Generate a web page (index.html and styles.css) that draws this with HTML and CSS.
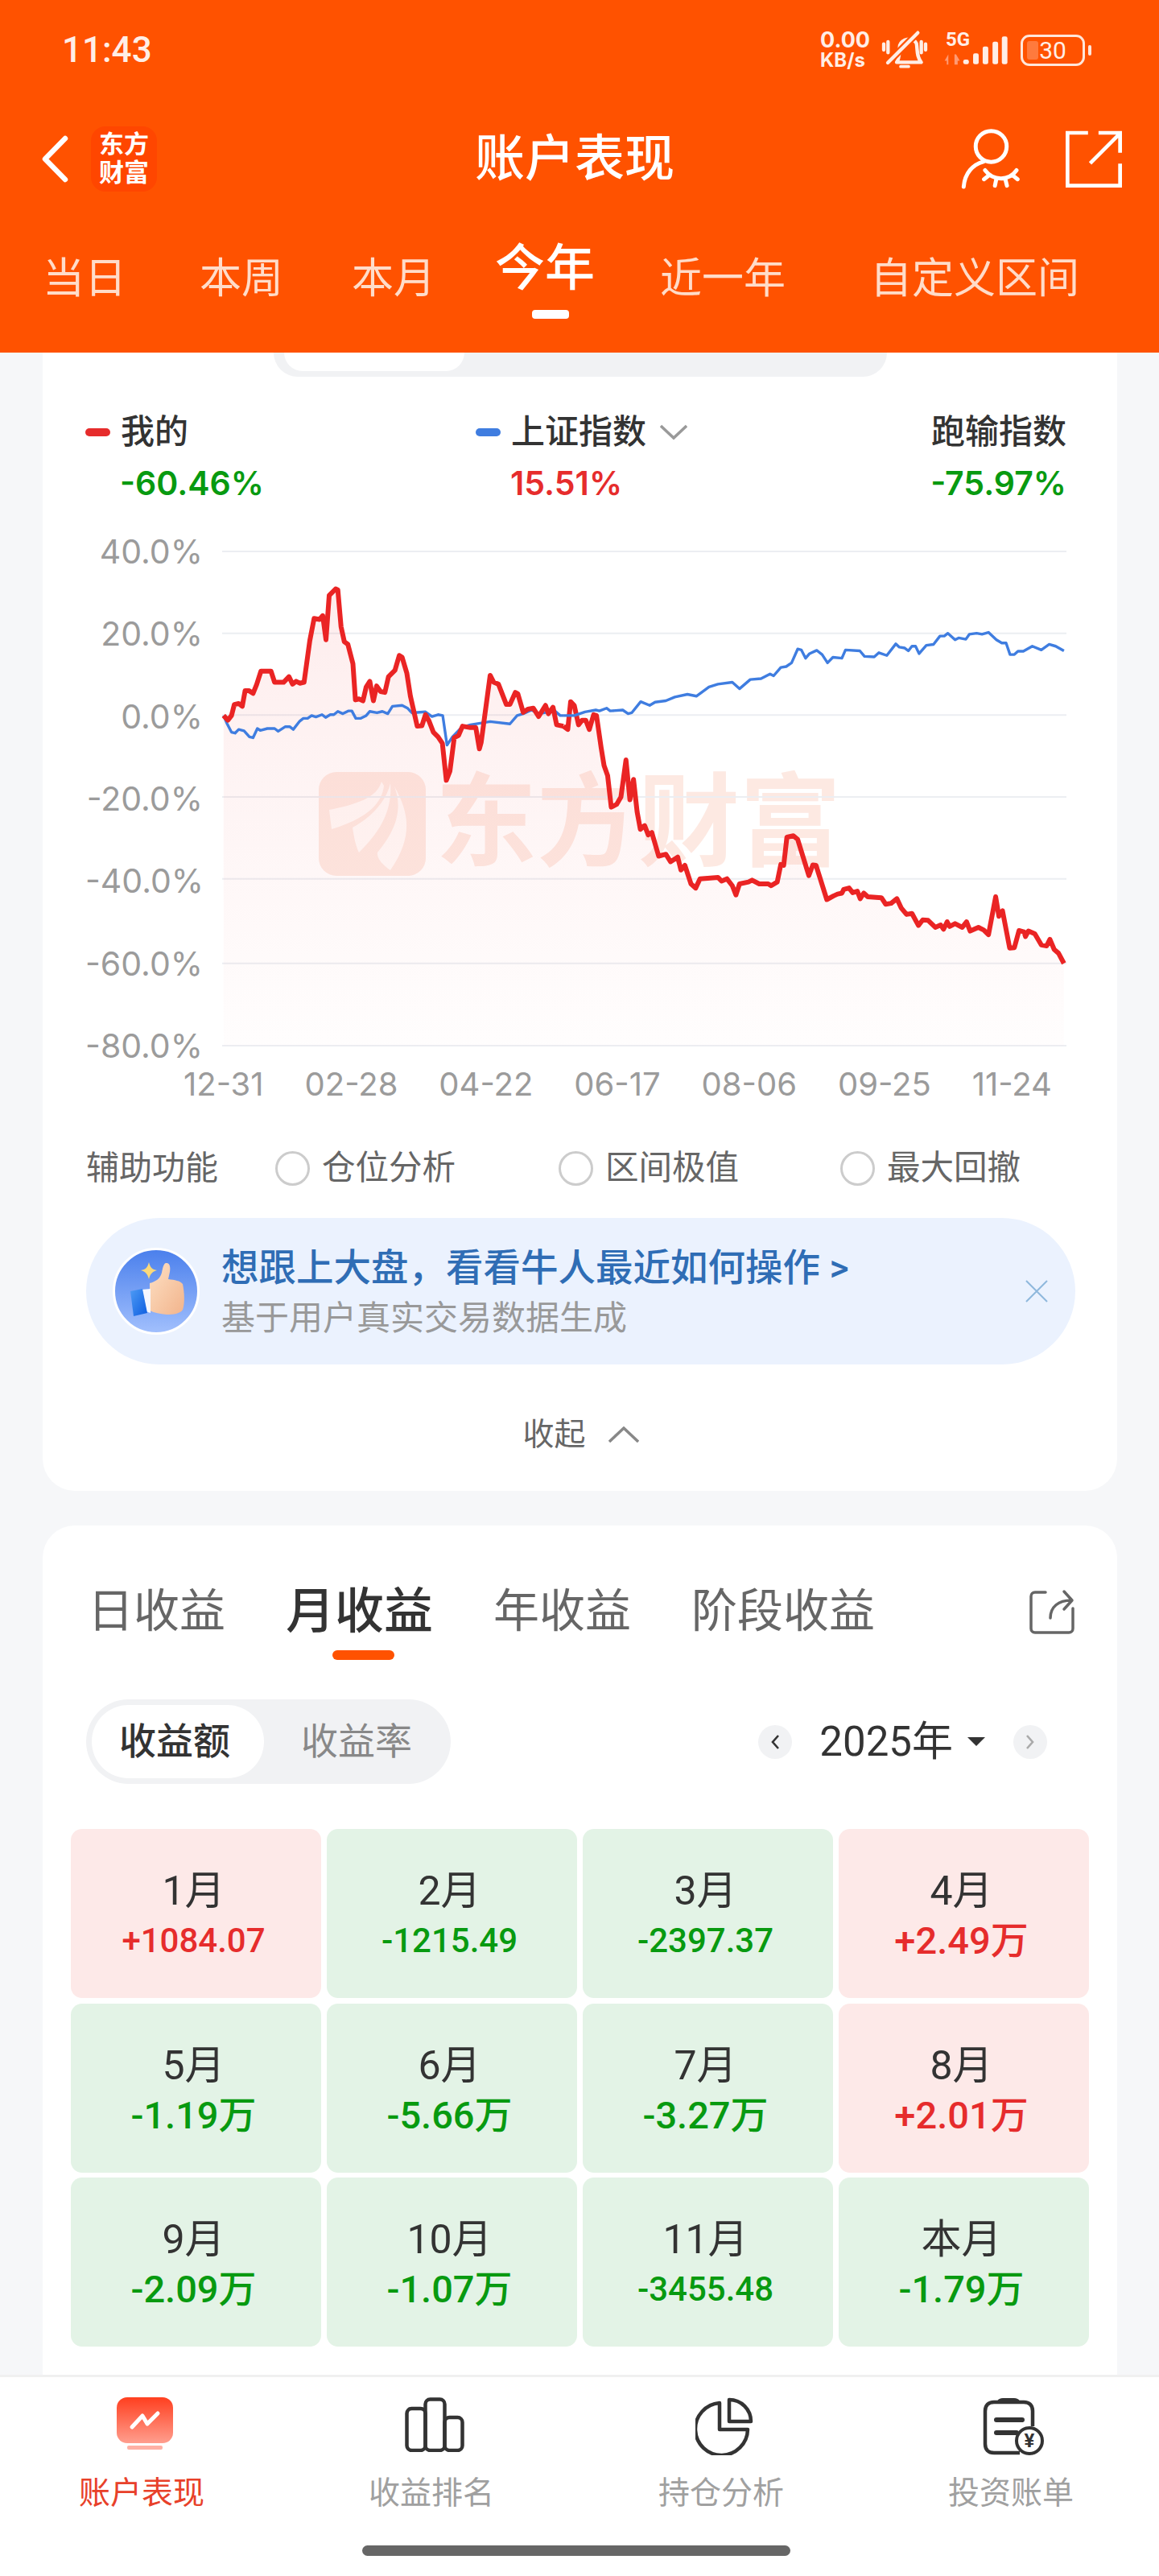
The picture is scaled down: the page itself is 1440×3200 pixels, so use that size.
FILE: index.html
```html
<!DOCTYPE html>
<html lang="zh-CN">
<head>
  <meta charset="UTF-8" />
  <title>账户表现</title>
  <link rel="stylesheet" href="styles.css">
</head>
<body>

  <header class="app-head">
    <div class="status">
      <span class="time">11:43</span>
      <div class="status-icons">
        <div class="speed"><span>0.00</span><span class="speed-unit">KB/s</span></div>
        <svg class="bell" viewBox="288 56 174 148" fill="none" stroke="#ffeee6" stroke-width="13" stroke-linecap="round" stroke-linejoin="round">
          <path d="M297 108v22M313 100v40M453 108v22M437 100v40"/>
          <path d="M345 176c14-18 8-42 12-64 5-22 48-32 62-6 4 24 0 50 18 70z"/>
          <path d="M312 178 424 66" stroke="#ff5200" stroke-width="26"/>
          <path d="M312 178 424 66"/>
          <path d="M360 192h30" stroke-width="11"/>
        </svg>
        <div class="signal">
          <span class="net">5G</span>
          <svg viewBox="510 70 245 118" fill="#ffeee6">
            <path d="M515 170l14-24v38h-6v-14zM552 146h6l14 24h-8v14h-12z" fill="#ff9a73"/>
            <rect x="585" y="165" width="21" height="18" rx="7"/>
            <rect x="622" y="142" width="21" height="41" rx="7"/>
            <rect x="658" y="116" width="21" height="67" rx="7"/>
            <rect x="695" y="98" width="21" height="85" rx="7"/>
            <rect x="730" y="78" width="21" height="105" rx="7"/>
          </svg>
        </div>
        <div class="battery"><i class="battery-fill"></i><span>30</span></div>
        <i class="battery-nub"></i>
      </div>
    </div>

    <div class="navbar">
      <div class="nav-left">
        <svg class="back" viewBox="0 0 33 59" fill="none" stroke="#fff" stroke-width="6.5" stroke-linecap="round" stroke-linejoin="round"><path d="M29 4 4 29.5 29 55"/></svg>
        <div class="brand">东方<br/>财富</div>
      </div>
      <div class="nav-title">账户表现</div>
      <div class="nav-right">
        <svg class="nav-user" viewBox="580 415 220 230" fill="none" stroke="#fff" stroke-width="15" stroke-linecap="round">
          <circle cx="693" cy="483" r="58"/>
          <path d="M590 634c4-50 34-84 74-94"/>
          <path d="M670 572c30 40 88 42 118 0M684 592l-18 14M712 606l-5 24M746 606l6 24M772 590l20 16"/>
        </svg>
        <svg class="nav-share" viewBox="970 420 215 218" fill="none" stroke="#fff" stroke-width="14">
          <path d="M1056 432H980v196h195v-82"/>
          <path d="M1095 432h80v74M1064 545l108-108"/>
        </svg>
      </div>
    </div>

    <nav class="range-tabs">
      <span>当日</span>
      <span>本周</span>
      <span>本月</span>
      <span class="on">今年</span>
      <span>近一年</span>
      <span>自定义区间</span>
    </nav>
  </header>

  <main class="scroll">
    <section class="card chart-card">
      <div class="seg-stub"><div class="seg-thumb"></div></div>

      <div class="legend">
        <div>
          <div class="legend-name"><i class="dash dash-red"></i>我的</div>
          <div class="legend-val down">-60.46%</div>
        </div>
        <div>
          <div class="legend-name"><i class="dash dash-blue"></i>上证指数
            <svg class="legend-caret" viewBox="0 0 34 20" fill="none" stroke="#999" stroke-width="3.5"><path d="M1 2l16 15L33 2"/></svg>
          </div>
          <div class="legend-val up">15.51%</div>
        </div>
        <div class="legend-end">
          <div class="legend-name">跑输指数</div>
          <div class="legend-val down">-75.97%</div>
        </div>
      </div>

      <div class="chart">
        <div class="y-axis">
          <span>40.0%</span><span>20.0%</span><span>0.0%</span><span>-20.0%</span><span>-40.0%</span><span>-60.0%</span><span>-80.0%</span>
        </div>
        <div class="plot">
          <div class="watermark">
            <svg viewBox="0 0 133 129">
              <rect width="133" height="129" rx="22" fill="#fde9e2"/>
              <path d="M78 12C72 32 48 40 13 47L16 71C52 60 78 44 81 17z" fill="#fffaf8"/>
              <path d="M89 14C84 36 66 56 42 69C44 82 46 92 50 100C72 78 92 52 89 14z" fill="#fffaf8"/>
              <path d="M94 18C112 50 118 80 89 122C80 116 72 108 73 100C98 70 104 44 94 18z" fill="#fffaf8"/>
            </svg>
            <span>东方财富</span>
          </div>
          <svg class="plot-lines" viewBox="484 357 2350 1069" preserveAspectRatio="none">
            <defs>
              <linearGradient id="areaFade" gradientUnits="userSpaceOnUse" x1="0" y1="440" x2="0" y2="1426">
                <stop offset="0" stop-color="#f24a4a" stop-opacity=".1"/>
                <stop offset="1" stop-color="#f24a4a" stop-opacity=".01"/>
              </linearGradient>
            </defs>
            <g class="grid-lines">
              <path d="M484 357H2834M484 534H2834M484 711H2834M484 888H2834M484 1065H2834M484 1248H2834M484 1426H2834"/>
            </g>
            <polygon fill="url(#areaFade)" points="488,1426 488,712 500,722 510,712 518,688 530,686 540,692 548,658 558,658 570,664 580,645 592,616 620,616 630,640 655,640 670,628 680,644 690,638 700,642 712,640 728,550 740,502 755,504 764,496 773,548 782,452 800,438 806,440 815,520 824,552 834,558 848,600 855,678 865,676 876,680 885,650 895,638 905,680 914,648 925,660 937,662 947,628 965,614 977,582 985,586 998,620 1008,670 1027,735 1040,734 1050,710 1060,724 1072,748 1085,758 1097,772 1108,852 1118,832 1130,760 1142,755 1153,735 1175,738 1190,738 1200,784 1205,770 1230,625 1240,640 1253,644 1275,688 1285,688 1300,662 1307,665 1322,705 1335,698 1350,696 1365,714 1384,690 1392,708 1405,694 1415,732 1434,735 1434,1426"/>
            <g transform="translate(1434 0)">
              <polygon fill="url(#areaFade)" points="0,1426 0,735 12,742 20,682 30,690 42,732 52,722 62,722 72,742 84,710 92,712 105,782 113,820 123,842 133,910 148,904 160,888 174,808 185,894 195,850 205,920 214,958 226,950 236,970 246,965 265,1016 285,1012 298,1028 318,1018 327,1046 338,1036 355,1076 368,1085 380,1065 430,1062 440,1070 455,1065 470,1080 480,1100 490,1076 515,1072 525,1068 545,1076 570,1076 578,1080 595,1072 605,1034 613,1036 622,975 640,972 652,980 683,1058 694,1035 703,1036 733,1110 752,1102 763,1098 775,1096 780,1088 795,1085 805,1095 818,1092 826,1108 836,1096 847,1104 885,1106 897,1120 912,1118 928,1108 940,1128 955,1142 970,1140 988,1166 1000,1154 1015,1155 1035,1170 1050,1165 1058,1174 1068,1158 1075,1168 1090,1162 1110,1170 1122,1158 1132,1178 1155,1170 1170,1176 1183,1186 1203,1104 1212,1146 1222,1134 1242,1215 1255,1214 1268,1177 1282,1180 1286,1190 1294,1178 1312,1184 1330,1208 1345,1210 1354,1196 1366,1218 1378,1226 1393,1248 1393,1426"/>
            </g>
            <polyline class="line-blue" points="488,712 498,730 510,748 520,750 530,742 545,745 560,758 570,760 582,740 590,744 610,740 630,740 640,746 660,736 672,736 682,742 700,724 710,718 722,718 733,712 745,715 762,710 772,716 785,710 795,710 806,703 820,708 835,702 845,702 856,718 870,718 885,712 895,703 915,706 930,703 945,708 958,692 985,690 1000,696 1012,706 1050,704 1068,714 1085,710 1098,712 1110,776 1125,758 1150,738 1175,732 1230,725 1285,730 1305,712 1322,708 1345,700 1365,708 1410,702 1425,712 1434,712"/>
            <polyline class="line-red" points="488,712 500,722 510,712 518,688 530,686 540,692 548,658 558,658 570,664 580,645 592,616 620,616 630,640 655,640 670,628 680,644 690,638 700,642 712,640 728,550 740,502 755,504 764,496 773,548 782,452 800,438 806,440 815,520 824,552 834,558 848,600 855,678 865,676 876,680 885,650 895,638 905,680 914,648 925,660 937,662 947,628 965,614 977,582 985,586 998,620 1008,670 1027,735 1040,734 1050,710 1060,724 1072,748 1085,758 1097,772 1108,852 1118,832 1130,760 1142,755 1153,735 1175,738 1190,738 1200,784 1205,770 1230,625 1240,640 1253,644 1275,688 1285,688 1300,662 1307,665 1322,705 1335,698 1350,696 1365,714 1384,690 1392,708 1405,694 1415,732 1434,735"/>
            <g transform="translate(1434 0)">
              <polyline class="line-red" points="0,735 12,742 20,682 30,690 42,732 52,722 62,722 72,742 84,710 92,712 105,782 113,820 123,842 133,910 148,904 160,888 174,808 185,894 195,850 205,920 214,958 226,950 236,970 246,965 265,1016 285,1012 298,1028 318,1018 327,1046 338,1036 355,1076 368,1085 380,1065 430,1062 440,1070 455,1065 470,1080 480,1100 490,1076 515,1072 525,1068 545,1076 570,1076 578,1080 595,1072 605,1034 613,1036 622,975 640,972 652,980 683,1058 694,1035 703,1036 733,1110 752,1102 763,1098 775,1096 780,1088 795,1085 805,1095 818,1092 826,1108 836,1096 847,1104 885,1106 897,1120 912,1118 928,1108 940,1128 955,1142 970,1140 988,1166 1000,1154 1015,1155 1035,1170 1050,1165 1058,1174 1068,1158 1075,1168 1090,1162 1110,1170 1122,1158 1132,1178 1155,1170 1170,1176 1183,1186 1203,1104 1212,1146 1222,1134 1242,1215 1255,1214 1268,1177 1282,1180 1286,1190 1294,1178 1312,1184 1330,1208 1345,1210 1354,1196 1366,1218 1378,1226 1393,1248"/>
              <polyline class="line-blue" points="0,712 30,712 60,704 90,700 100,702 120,696 130,702 165,700 180,708 190,706 215,682 240,690 255,683 285,680 310,672 345,666 370,670 405,650 430,644 470,640 490,654 520,634 550,632 575,622 585,626 605,608 620,606 635,598 652,568 662,570 674,588 685,578 705,571 720,580 735,598 750,586 775,588 785,570 825,572 838,584 865,585 878,576 900,582 925,557 935,564 950,566 960,572 970,562 980,562 990,578 1010,560 1030,558 1048,540 1060,540 1070,534 1090,548 1100,544 1120,547 1130,536 1150,534 1165,536 1183,532 1205,548 1220,555 1232,555 1243,580 1255,580 1265,573 1280,573 1305,562 1330,570 1352,558 1370,562 1393,572"/>
            </g>
          </svg>
        </div>
      </div>

      <div class="x-axis">
        <span>12-31</span><span>02-28</span><span>04-22</span><span>06-17</span><span>08-06</span><span>09-25</span><span>11-24</span>
      </div>

      <div class="aux-row">
        <span>辅助功能</span>
        <label class="aux-opt"><i></i>仓位分析</label>
        <label class="aux-opt"><i></i>区间极值</label>
        <label class="aux-opt"><i></i>最大回撤</label>
      </div>

      <div class="banner">
        <svg class="banner-pic" viewBox="0 0 108 108">
          <defs>
            <linearGradient id="picBg" x1="0" y1="0" x2="0" y2="1">
              <stop offset="0" stop-color="#4a7fec"/>
              <stop offset="1" stop-color="#a2c0fd"/>
            </linearGradient>
            <linearGradient id="picHand" x1="0" y1="0" x2="1" y2="1">
              <stop offset="0" stop-color="#fde0c4"/>
              <stop offset="1" stop-color="#f2b48c"/>
            </linearGradient>
            <linearGradient id="picCuff" x1="0" y1="0" x2="1" y2="1">
              <stop offset="0" stop-color="#4d9bf5"/>
              <stop offset="1" stop-color="#0f5ee0"/>
            </linearGradient>
          </defs>
          <circle cx="54" cy="54" r="52.5" fill="url(#picBg)" stroke="#fff" stroke-width="3"/>
          <path d="M45 18c2 7 4 9 10 10-6 2-8 4-10 11-2-7-4-9-10-11 6-1 8-3 10-10z" fill="#fbd97a"/>
          <path d="M46 44c8-2 13-6 15-13 1-5 2-11 5-12 5-1 6 5 5 11l-2 9c8 1 15 2 18 6 2 9 3 24 0 32-3 5-12 6-20 6-8-1-15-2-21-5z" fill="url(#picHand)"/>
          <path d="M36 52l11-1 0 30-9-3z" fill="#f6f8ff"/>
          <path d="M22 54l15-3 6 30-17 4z" fill="url(#picCuff)"/>
        </svg>
        <div class="banner-text">
          <div class="banner-title">想跟上大盘，看看牛人最近如何操作 &gt;</div>
          <div class="banner-sub">基于用户真实交易数据生成</div>
        </div>
        <svg class="banner-close" viewBox="0 0 28 28" fill="none" stroke="#8fb8dc" stroke-width="2"><path d="M1 1l26 26M27 1 1 27"/></svg>
      </div>

      <div class="fold">
        <span>收起</span>
        <svg viewBox="0 0 38 20" fill="none" stroke="#888" stroke-width="3.5"><path d="M1 19 19 2l18 17"/></svg>
      </div>
    </section>

    <section class="card income-card">
      <div class="income-tabs">
        <span>日收益</span>
        <span class="on">月收益</span>
        <span>年收益</span>
        <span>阶段收益</span>
        <svg class="income-share" viewBox="0 0 56 56" fill="none" stroke="#666" stroke-width="3.5" stroke-linecap="round" stroke-linejoin="round">
          <path d="M20 4H7C4 4 2 6 2 9v40c0 3 2 5 5 5h42c3 0 5-2 5-5V24"/>
          <path d="M26 36c0-14 10-22 26-22M43 3l10 11-10 11"/>
        </svg>
      </div>

      <div class="income-bar">
        <div class="toggle">
          <span class="on">收益额</span>
          <span class="off">收益率</span>
        </div>
        <div class="year">
          <i class="year-btn"><svg viewBox="0 0 12 20" fill="none" stroke="#333" stroke-width="2.6"><path d="M10 2 3 10l7 8"/></svg></i>
          <span class="year-text">2025年</span>
          <i class="year-caret"></i>
          <i class="year-btn"><svg viewBox="0 0 12 20" fill="none" stroke="#aaa" stroke-width="2.6"><path d="M2 2l7 8-7 8"/></svg></i>
        </div>
      </div>

      <div class="months">
        <div class="cell gain"><b>1月</b><span>+1084.07</span></div>
        <div class="cell loss"><b>2月</b><span>-1215.49</span></div>
        <div class="cell loss"><b>3月</b><span>-2397.37</span></div>
        <div class="cell gain"><b>4月</b><span class="big">+2.49万</span></div>
        <div class="cell loss"><b>5月</b><span class="big">-1.19万</span></div>
        <div class="cell loss"><b>6月</b><span class="big">-5.66万</span></div>
        <div class="cell loss"><b>7月</b><span class="big">-3.27万</span></div>
        <div class="cell gain"><b>8月</b><span class="big">+2.01万</span></div>
        <div class="cell loss"><b>9月</b><span class="big">-2.09万</span></div>
        <div class="cell loss"><b>10月</b><span class="big">-1.07万</span></div>
        <div class="cell loss"><b>11月</b><span>-3455.48</span></div>
        <div class="cell loss"><b>本月</b><span class="big">-1.79万</span></div>
      </div>
    </section>
  </main>

  <footer class="tabbar">
    <div class="tabbar-items">
      <div class="tab-item on">
        <div class="tab-icon">
          <svg width="70" height="65" viewBox="0 0 70 65">
            <defs>
              <linearGradient id="tabOn" x1="0" y1="0" x2="0" y2="1">
                <stop offset="0" stop-color="#ff3f1f"/>
                <stop offset="1" stop-color="#ff9e8e"/>
              </linearGradient>
            </defs>
            <rect width="70" height="57" rx="13" fill="url(#tabOn)"/>
            <rect x="13" y="60" width="44" height="5" rx="2" fill="#ffb0a4"/>
            <path d="M19 37 32 23l6 10 13-13" fill="none" stroke="#fff" stroke-width="5" stroke-linecap="round" stroke-linejoin="round"/>
          </svg>
        </div>
        <span>账户表现</span>
      </div>
      <div class="tab-item">
        <div class="tab-icon">
          <svg width="74" height="68" viewBox="0 0 74 68" fill="none" stroke="#333" stroke-width="4.5">
            <rect x="2.5" y="14" width="23" height="52" rx="6"/>
            <rect x="25.5" y="2.5" width="24" height="63.5" rx="6"/>
            <rect x="49.5" y="25" width="22" height="41" rx="6"/>
          </svg>
        </div>
        <span>收益排名</span>
      </div>
      <div class="tab-item">
        <div class="tab-icon">
          <svg width="72" height="72" viewBox="0 0 72 72" fill="none" stroke="#333" stroke-width="4.5" stroke-linejoin="round">
            <path d="M30 7A32.5 32.5 0 1 0 65 40H30z"/>
            <path d="M42 3a27 27 0 0 1 27 27H42z"/>
          </svg>
        </div>
        <span>持仓分析</span>
      </div>
      <div class="tab-item">
        <div class="tab-icon">
          <svg width="78" height="72" viewBox="0 0 78 72" fill="none" stroke="#333" stroke-width="4.5">
            <path d="M46 69H14C7 69 3 65 3 58V17C3 10 7 6 14 6H51C58 6 62 10 62 17V36"/>
            <path d="M18 5c1-3 4-4 7-4h14c3 0 6 1 7 4z" fill="#333" stroke="none"/>
            <path d="M17 28H49M17 44H42" stroke-width="6" stroke-linecap="round"/>
            <circle cx="58" cy="54" r="16" fill="#fff" stroke-width="4"/>
            <text class="yen" x="58" y="62" text-anchor="middle">¥</text>
          </svg>
        </div>
        <span>投资账单</span>
      </div>
    </div>
    <div class="home-bar"></div>
  </footer>

</body>
</html>
```

FILE: styles.css
```css
* { box-sizing: border-box; }
html, body { margin: 0; padding: 0; }
body {
  width: 1440px;
  height: 3200px;
  overflow: hidden;
  display: flex;
  flex-direction: column;
  background: #f6f7f9;
  color: #333;
  font-family: Roboto, "Noto Sans CJK SC", sans-serif;
}
i { display: block; font-style: normal; }

/* header */
.app-head {
  flex: none;
  height: 438px;
  background: #ff5200;
  color: #fff;
}
.status {
  height: 124px;
  padding: 0 84px 0 77px;
  display: flex;
  justify-content: space-between;
  align-items: center;
}
.time {
  font-size: 44px;
  font-weight: 500;
  color: #ffeee6;
}
.status-icons {
  display: flex;
  align-items: center;
  color: #ffeee6;
}
.speed {
  width: 61px;
  display: flex;
  flex-direction: column;
  font-family: Inter, sans-serif;
  font-size: 27px;
  font-weight: 700;
  line-height: 25px;
  white-space: nowrap;
}
.speed-unit { font-size: 24px; }
.bell {
  width: 58px;
  height: 50px;
  margin-left: 15px;
}
.signal {
  position: relative;
  width: 81px;
  height: 40px;
  margin-left: 19px;
}
.signal svg { width: 81px; height: 40px; display: block; }
.net {
  position: absolute;
  left: 3px;
  top: -6px;
  font-size: 24px;
  line-height: 26px;
  font-weight: 700;
}
.battery {
  position: relative;
  width: 80px;
  height: 39px;
  margin-left: 15px;
  border: 3px solid #ffe6da;
  border-radius: 11px;
  font-size: 30px;
  line-height: 33px;
  text-align: center;
}
.battery span { position: relative; }
.battery-fill {
  position: absolute;
  left: 5px;
  top: 5px;
  width: 14px;
  height: 23px;
  border-radius: 3px;
  background: #ff7a3d;
}
.battery-nub {
  width: 4px;
  height: 13px;
  margin-left: 4px;
  border-radius: 2px;
  background: #ffe6da;
}

.navbar {
  height: 146px;
  display: grid;
  grid-template-columns: 590px auto 1fr;
  align-items: center;
}
.nav-left {
  display: flex;
  align-items: center;
  gap: 28px;
  padding-left: 52px;
}
.back { width: 33px; height: 59px; }
.brand {
  width: 82px;
  height: 81px;
  border-radius: 18px;
  background: #ff4600;
  font-size: 31px;
  line-height: 35px;
  font-weight: 700;
  text-align: center;
  padding-top: 5px;
}
.nav-title {
  padding-top: 2px;
  font-size: 62px;
  font-weight: 500;
  line-height: 70px;
}
.nav-right {
  display: flex;
  justify-content: flex-end;
  align-items: center;
  gap: 56px;
  padding-right: 45px;
}
.nav-user { width: 73px; height: 77px; }
.nav-share { width: 72px; height: 73px; }

.range-tabs {
  display: grid;
  grid-template-columns: 195px 189px 178px 205px 261px auto;
  padding: 42px 0 0 53px;
  align-items: start;
  font-size: 52px;
  line-height: 70px;
  color: #ffdcc9;
}
.range-tabs .on {
  position: relative;
  margin-top: -13px;
  font-size: 62px;
  font-weight: 500;
  color: #fff;
}
.range-tabs .on::after {
  content: "";
  position: absolute;
  left: 46px;
  top: 86px;
  width: 46px;
  height: 11px;
  border-radius: 4px;
  background: #fff;
}

/* scroll area */
.scroll {
  flex: 1;
  min-height: 0;
  overflow: hidden;
  padding: 0 52px 0 53px;
  display: flex;
  flex-direction: column;
}
.card { background: #fff; }
.chart-card {
  flex: none;
  border-radius: 0 0 40px 40px;
  padding: 0 63px 45px 53px;
}
.seg-stub {
  width: 762px;
  height: 30px;
  margin-left: 234px;
  padding: 0 13px;
  background: #f1f2f4;
  border-radius: 0 0 36px 36px;
}
.seg-thumb {
  width: 224px;
  height: 23px;
  background: #fff;
  border-radius: 0 0 30px 30px;
}

.legend {
  display: grid;
  grid-template-columns: 485px 1fr auto;
  margin-top: 44px;
}
.legend-name {
  display: flex;
  align-items: center;
  font-size: 42px;
  line-height: 50px;
  color: #333;
  font-weight: 500;
}
.dash {
  width: 31px;
  height: 10px;
  margin-right: 13px;
  border-radius: 5px;
}
.dash-red { background: #e62c2c; }
.dash-blue { background: #3f7de0; }
.legend-caret { width: 34px; height: 20px; margin-left: 17px; }
.legend-val {
  margin: 13px 0 0 43px;
  font-family: Inter, sans-serif;
  font-size: 41px;
  line-height: 50px;
  font-weight: 600;
}
.legend-end { text-align: right; }
.legend-end .legend-name { justify-content: flex-end; }
.legend-end .legend-val { margin-left: 0; }
.up { color: #e62c2c; }
.down { color: #089a10; }

.chart {
  display: grid;
  grid-template-columns: 146px 1049px;
  column-gap: 24px;
  margin-top: 60px;
}
.y-axis {
  display: flex;
  flex-direction: column;
  justify-content: space-between;
  margin: -25px 0;
  text-align: right;
  font-family: Inter, sans-serif;
  font-size: 41px;
  line-height: 50px;
  color: #9b9b9b;
}
.plot {
  position: relative;
  height: 614px;
}
.watermark {
  position: absolute;
  left: 120px;
  top: 274px;
  display: flex;
  gap: 12px;
  color: #fde9e2;
  font-size: 126px;
  line-height: 129px;
  font-weight: 700;
  white-space: nowrap;
}
.watermark svg { width: 133px; height: 129px; }
.plot-lines {
  position: relative;
  display: block;
  width: 1049px;
  height: 614px;
  overflow: visible;
}
.grid-lines path {
  fill: none;
  stroke: #eceef2;
  stroke-width: 2;
  vector-effect: non-scaling-stroke;
}
.line-red, .line-blue {
  fill: none;
  stroke-linejoin: round;
  vector-effect: non-scaling-stroke;
}
.line-red { stroke: #ea2424; stroke-width: 6; }
.line-blue { stroke: #3f7de0; stroke-width: 3.4; }

.x-axis {
  display: flex;
  justify-content: space-between;
  margin: 23px 18px 0 122px;
  font-family: Inter, sans-serif;
  font-size: 40px;
  line-height: 50px;
  color: #9b9b9b;
}

.aux-row {
  display: grid;
  grid-template-columns: 235px 352px 350px auto;
  align-items: center;
  margin: 54px 0 0 1px;
  font-size: 41px;
  line-height: 50px;
  color: #666;
}
.aux-opt {
  display: flex;
  align-items: center;
  gap: 15px;
  font-size: 41.5px;
}
.aux-opt i {
  width: 43px;
  height: 43px;
  border: 3px solid #ccc;
  border-radius: 50%;
}

.banner {
  display: flex;
  align-items: center;
  width: 1229px;
  height: 182px;
  margin: 37px 0 0 1px;
  padding: 0 34px 0 33px;
  border-radius: 91px;
  background: #ebf2fe;
}
.banner-pic { flex: none; width: 108px; height: 108px; }
.banner-text { margin-left: 27px; padding-top: 5px; }
.banner-title {
  font-size: 46.5px;
  line-height: 60px;
  font-weight: 500;
  color: #2f6db5;
}
.banner-sub {
  margin-top: 3px;
  font-size: 42px;
  line-height: 60px;
  color: #999;
}
.banner-close { width: 28px; height: 28px; margin-left: auto; }

.fold {
  display: flex;
  justify-content: center;
  align-items: center;
  gap: 28px;
  margin-top: 62px;
  padding-left: 12px;
  font-size: 39px;
  line-height: 50px;
  color: #666;
}
.fold svg { width: 38px; height: 20px; }

.income-card {
  flex: 1;
  margin-top: 43px;
  border-radius: 40px 40px 0 0;
  overflow: hidden;
}
.income-tabs {
  display: flex;
  align-items: center;
  gap: 75px;
  padding: 72px 53px 0 56px;
  font-size: 57px;
  line-height: 70px;
  color: #666;
}
.income-tabs .on {
  position: relative;
  font-size: 61px;
  font-weight: 500;
  color: #333;
}
.income-tabs .on::after {
  content: "";
  position: absolute;
  left: 58px;
  top: 83px;
  width: 77px;
  height: 12px;
  border-radius: 6px;
  background: #ff5200;
}
.income-share { width: 56px; height: 56px; margin-left: auto; }

.income-bar {
  display: flex;
  justify-content: space-between;
  align-items: center;
  margin: 74px 87px 0 54px;
}
.toggle {
  display: grid;
  grid-template-columns: 210px 230px;
  align-items: center;
  width: 453px;
  height: 105px;
  padding: 7px;
  border-radius: 53px;
  background: #f1f2f4;
  font-size: 46px;
  line-height: 91px;
  text-align: center;
  color: #888;
}
.toggle .on {
  width: 214px;
  border-radius: 46px;
  padding-right: 8px;
  background: #fff;
  color: #333;
  font-weight: 500;
}
.toggle .off { padding-left: 8px; }
.year { display: flex; align-items: center; }
.year-btn {
  width: 42px;
  height: 42px;
  display: flex;
  justify-content: center;
  align-items: center;
  border-radius: 50%;
  background: #f1f2f4;
}
.year-btn svg { width: 12px; height: 20px; }
.year-text {
  margin-left: 34px;
  font-size: 51px;
  line-height: 60px;
  color: #333;
}
.year-caret {
  width: 0;
  height: 0;
  margin: 0 35px 0 18px;
  border-left: 11px solid transparent;
  border-right: 11px solid transparent;
  border-top: 11px solid #333;
}

.months {
  display: grid;
  grid-template-columns: repeat(4, 1fr);
  grid-auto-rows: 210px;
  gap: 6.5px 7px;
  margin: 56px 35px 0;
}
.cell {
  display: flex;
  flex-direction: column;
  justify-content: center;
  align-items: center;
  padding: 6px 6px 0 0;
  border-radius: 14px;
}
.cell b {
  font-size: 50px;
  line-height: 58px;
  font-weight: 400;
  color: #333;
}
.cell span {
  margin-top: 4px;
  font-size: 42px;
  line-height: 58px;
  font-weight: 500;
}
.cell .big { font-size: 47px; }
.gain { background: #fde9e8; }
.gain span { color: #e62c2c; }
.loss { background: #e3f3e6; }
.loss span { color: #089a10; }

/* bottom tabs */
.tabbar {
  flex: none;
  height: 250px;
  background: #fff;
  border-top: 3px solid #f0f0f0;
}
.tabbar-items {
  display: grid;
  grid-template-columns: repeat(4, 1fr);
  padding-top: 25px;
}
.tab-item {
  display: flex;
  flex-direction: column;
  align-items: center;
  font-size: 39px;
  line-height: 50px;
  color: #a0a0a0;
}
.tab-item span { padding-right: 8px; }
.tab-item.on { color: #e8412a; }
.tab-icon {
  height: 72px;
  margin-bottom: 22px;
}
.tab-icon svg { display: block; }
.yen {
  fill: #333;
  stroke: none;
  font-family: Roboto, sans-serif;
  font-size: 24px;
  font-weight: 700;
}
.home-bar {
  width: 532px;
  height: 13px;
  margin: 40px 0 0 450px;
  border-radius: 7px;
  background: #666;
}
```
